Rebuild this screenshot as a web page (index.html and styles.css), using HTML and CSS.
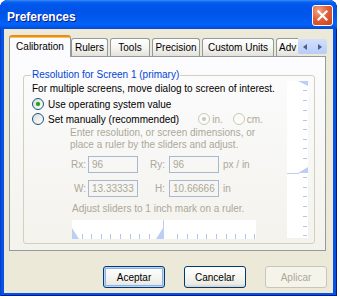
FILE: index.html
```html
<!DOCTYPE html>
<html lang="en">
<head>
  <meta charset="UTF-8" />
  <title>Preferences</title>
  <link rel="stylesheet" href="styles.css">
</head>
<body>
  <div class="window">
    <div class="titlebar">
      <span class="title">Preferences</span>
      <span class="close">
        <svg width="19" height="19" viewBox="0 0 19 19"><path d="M5.5 5.5L13.5 13.5M13.5 5.5L5.5 13.5" stroke="#fff" stroke-width="2.2" stroke-linecap="square"/></svg>
      </span>
    </div>

    <div class="client">
      <div class="tabs-head">
        <div class="tabstrip">
          <div class="tab active tab-cal">Calibration</div>
          <div class="tab tab-rulers">Rulers</div>
          <div class="tab tab-tools">Tools</div>
          <div class="tab tab-prec">Precision</div>
          <div class="tab tab-units">Custom Units</div>
          <div class="tab tab-adv">Adv</div>
        </div>
        <div class="tab-scroll">
          <span class="arrow arrow-left"></span>
          <span class="arrow arrow-right"></span>
        </div>
      </div>

      <div class="panel">
        <fieldset class="group">
          <legend>Resolution for Screen 1 (primary)</legend>
          <div class="group-body">
            <div class="main">
              <p class="line">For multiple screens, move dialog to screen of interest.</p>
              <div class="radio-row first"><span class="radio checked"></span>Use operating system value</div>
              <div class="radio-row">
                <span class="radio"></span>Set manually (recommended)
                <span class="units">
                  <span class="radio checked disabled"></span><span class="unit-in">in.</span>
                  <span class="radio disabled"></span>cm.
                </span>
              </div>
              <p class="hint">Enter resolution, or screen dimensions, or<br>place a ruler by the sliders and adjust.</p>
              <div class="field-row">
                <span class="lbl">Rx:</span><input type="text" value="96" disabled>
                <span class="lbl lbl-2">Ry:</span><input type="text" value="96" disabled>
                <span class="unit">px / in</span>
              </div>
              <div class="field-row second">
                <span class="lbl">W:</span><input type="text" value="13.33333" disabled>
                <span class="lbl lbl-2">H:</span><input type="text" value="10.66666" disabled>
                <span class="unit">in</span>
              </div>
              <p class="hint adjust">Adjust sliders to 1 inch mark on a ruler.</p>
              <svg class="hruler" width="184" height="19" viewBox="0 0 184 19">
                <rect width="184" height="19" fill="#fff"/>
                <path d="M0 8V19H7Z M91 8V19H84Z" fill="#bccef5"/>
                <path d="M91.5 0V19" stroke="#bccef5"/>
                <path d="M10.5 14V19M19.5 14V19M29.5 14V19M38.5 14V19M48.5 14V19M58.5 14V19M67.5 14V19M77.5 14V19M105.5 14V19M115.5 14V19M125.5 14V19M134.5 14V19M144.5 14V19M154.5 14V19M163.5 14V19M173.5 14V19M182.5 14V19" stroke="#b3c6ef"/>
              </svg>
            </div>
            <svg class="vruler" width="21" height="157" viewBox="0 0 21 157">
              <rect width="21" height="157" fill="#fff"/>
              <path d="M11 0H21V5Z M21 86V92H11Z" fill="#bccef5"/>
              <path d="M0 92.5H12" stroke="#bccef5"/>
              <path d="M16 9.5H20M16 19.5H20M16 29.5H20M16 39.5H20M16 48.5H20M16 58.5H20M16 67.5H20M16 77.5H20M16 96.5H20M16 106.5H20M16 115.5H20M16 125.5H20M16 135.5H20M16 145.5H20M16 154.5H20" stroke="#b3c6ef"/>
            </svg>
          </div>
        </fieldset>
      </div>

      <div class="buttons">
        <button class="btn default">Aceptar</button>
        <button class="btn">Cancelar</button>
        <button class="btn" disabled>Aplicar</button>
      </div>
    </div>
  </div>
</body>
</html>
```

FILE: styles.css
```css
body {
  margin: 0;
  background: #ffffff;
  font-family: "Liberation Sans", Arial, sans-serif;
  font-size: 10px;
  color: #000;
}
.window {
  width: 337px;
  height: 296px;
  box-sizing: border-box;
  padding: 0 4px 3px 4px;
  display: flex;
  flex-direction: column;
  background: #0553e2;
  border-radius: 8px 8px 0 0;
  box-shadow: inset 1px 0 #0a3cd0, inset -1px 0 #00199c, inset 0 -1px #00199c;
  overflow: hidden;
}
.titlebar {
  height: 29px;
  margin: 0 -4px;
  display: flex;
  align-items: flex-start;
  background: linear-gradient(#3a8cf8 0, #0b63f0 2px, #0058ee 4px, #0054e6 11px, #0058ee 18px, #0163fa 24px, #0156ea 27px, #0a45c8 29px);
  border-radius: 8px 8px 0 0;
}
.title {
  margin: 10px 0 0 7px;
  line-height: 14px;
  font-size: 12px;
  font-weight: bold;
  color: #fff;
  text-shadow: 1px 1px #0c1a8e;
  flex: 1;
}
.close {
  width: 21px;
  height: 21px;
  margin: 5px 4px 0 0;
  box-sizing: border-box;
  border: 1px solid #fff;
  border-radius: 3px;
  background: radial-gradient(circle at 30% 25%, #f0a588 0, #e2603a 45%, #cb3f19 100%);
  display: flex;
  align-items: center;
  justify-content: center;
}
.client {
  flex: 1;
  background: #ece9d8;
  padding: 6px 0 0 5px;
  display: flex;
  flex-direction: column;
}

/* tabs */
.tabs-head {
  height: 22px;
  display: flex;
  position: relative;
  z-index: 1;
}
.tabstrip {
  width: 289px;
  height: 22px;
  display: flex;
  align-items: flex-start;
  overflow: hidden;
}
.tab {
  flex: none;
  height: 18px;
  margin-top: 3px;
  margin-left: 2px;
  box-sizing: border-box;
  border: 1px solid #919b9c;
  border-bottom: none;
  border-radius: 3px 3px 0 0;
  background: linear-gradient(#ffffff, #f4f4f0 55%, #e3e1d9);
  text-align: center;
  line-height: 17px;
  white-space: nowrap;
}
.tab.active {
  height: 22px;
  margin-top: 0;
  margin-left: 0;
  border-top: 2px solid #e68b2c;
  box-shadow: inset 0 1px #ffc73c;
  background: #fcfcfe;
  line-height: 19px;
}
.tab-cal { width: 62px; }
.tab-rulers { width: 37px; margin-left: 0; }
.tab-tools { width: 40px; }
.tab-prec { width: 48px; }
.tab-units { width: 72px; }
.tab-adv { width: 40px; text-align: left; padding-left: 2px; }
.tab-scroll {
  width: 29px;
  height: 15px;
  margin-top: 4px;
  border-radius: 2px;
  background: linear-gradient(#d3e0fc, #b8ccf8);
  display: flex;
  align-items: center;
  justify-content: space-around;
}
.arrow {
  width: 0;
  height: 0;
  border-top: 3.5px solid transparent;
  border-bottom: 3.5px solid transparent;
}
.arrow-left { border-right: 4px solid #4a5f8c; }
.arrow-right { border-left: 4px solid #4a5f8c; }

/* tab page */
.panel {
  width: 317px;
  height: 195px;
  margin-top: -1px;
  box-sizing: border-box;
  border: 1px solid #919b9c;
  background: linear-gradient(#fcfcfe, #f3f2ec);
}
.group {
  margin: 12px 10px 0 13px;
  padding: 0 6px 4px 8px;
  border: 1px solid #d0d0bf;
  border-radius: 3px;
  min-width: 0;
}
.group legend {
  padding: 0 1px;
  margin-left: -1px;
  line-height: 12px;
  color: #0046d5;
}
.group-body {
  display: flex;
  align-items: flex-start;
}
.main {
  flex: 1;
}
.vruler {
  display: block;
  flex: none;
}
.line {
  margin: 2px 0 0;
  line-height: 12px;
}
.radio-row {
  display: flex;
  align-items: center;
  height: 12px;
  margin-top: 3px;
  white-space: nowrap;
}
.radio {
  flex: none;
  width: 12px;
  height: 12px;
  margin-right: 4px;
  box-sizing: border-box;
  border: 1px solid #1c5180;
  border-radius: 50%;
  background: linear-gradient(135deg, #dcdcd7, #ffffff);
  display: inline-flex;
  align-items: center;
  justify-content: center;
}
.radio.checked::after {
  content: "";
  width: 4px;
  height: 4px;
  border-radius: 50%;
  background: #21a121;
  box-shadow: 0 0 1px #55d551;
}
.radio.disabled {
  border-color: #cac8bb;
  background: #fbfbf8;
}
.radio.disabled.checked::after {
  background: #cac8bb;
  box-shadow: none;
}
.units {
  display: flex;
  align-items: center;
  margin-left: 19px;
  color: #aca899;
}
.units .radio {
  margin-right: 2px;
}
.unit-in {
  margin-right: 10px;
}
.hint {
  margin: 2px 0 0 38px;
  line-height: 12px;
  color: #aca899;
}
.hint.adjust {
  margin: 6px 0 0 40px;
}
.field-row {
  display: flex;
  align-items: center;
  margin: 5px 0 0 36px;
  color: #aca899;
}
.field-row.second {
  margin-top: 7px;
}
.lbl {
  width: 18px;
  margin-right: 2px;
  text-align: right;
}
.lbl-2 {
  width: 27px;
  margin-right: 4px;
}
.unit {
  margin-left: 4px;
}
.field-row input {
  width: 50px;
  height: 17px;
  margin: 0;
  padding: 0 3px;
  box-sizing: border-box;
  border: 1px solid #a7b8d0;
  background: transparent;
  font-family: inherit;
  font-size: 10px;
  color: #aca899;
}
.hruler {
  display: block;
  margin: 5px 0 0 40px;
}

/* buttons */
.buttons {
  display: flex;
  justify-content: flex-end;
  gap: 19px;
  margin-top: 15px;
  padding-right: 6px;
}
.btn {
  width: 62px;
  height: 22px;
  padding: 0;
  border: 1px solid #003c74;
  border-radius: 3px;
  background: linear-gradient(#ffffff, #f5f5f1 50%, #ecebe6 85%, #d6d0c5);
  font-family: inherit;
  font-size: 10px;
  color: #000;
}
.btn.default {
  box-shadow: inset 0 0 0 1px #bcd4f6, inset 0 0 0 2px #8db2e8;
}
.btn:disabled {
  border-color: #c9c7ba;
  background: #f5f4ea;
  color: #aca899;
}
```
